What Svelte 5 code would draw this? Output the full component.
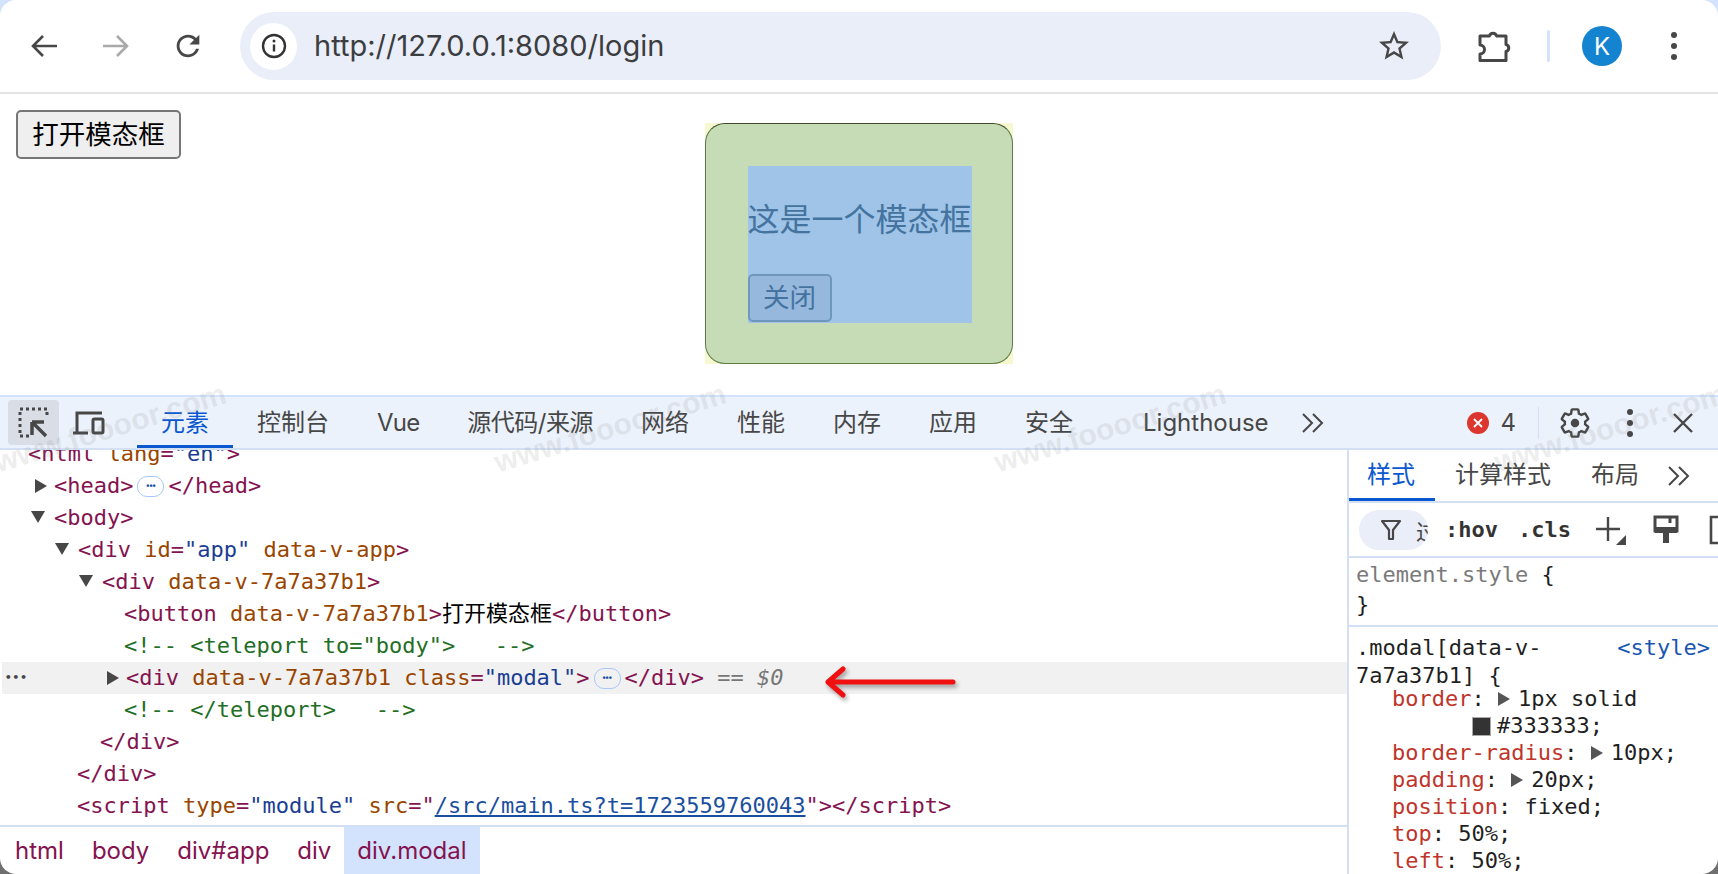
<script>
const tabs = [
	{ label: "控制台" },
	{ label: "Vue", cls: "tight-a" },
	{ label: "源代码/来源", cls: "tight-b" },
	{ label: "网络" },
	{ label: "性能" },
	{ label: "内存" },
	{ label: "应用" },
	{ label: "安全" },
	{ label: "Lighthouse", cls: "far" }
];
const crumbs = ["html", "body", "div#app", "div"];
const marks = [110, 610, 1110, 1610];
const scriptClose = "\"></scr" + "ipt>";

// t tag, a attr name, v attr value, c comment, txt plain text
const rows = [
	{ pad: 28, parts: [["t", "<html "], ["a", "lang"], ["t", "="], ["v", "\"en\""], ["t", ">"]] },
	{ pad: 54, arrow: "right", parts: [["t", "<head>"], ["more", ""], ["t", "</head>"]] },
	{ pad: 54, arrow: "down", parts: [["t", "<body>"]] },
	{ pad: 78, arrow: "down", parts: [["t", "<div "], ["a", "id"], ["t", "="], ["v", "\"app\""], ["a", " data-v-app"], ["t", ">"]] },
	{ pad: 102, arrow: "down", parts: [["t", "<div "], ["a", "data-v-7a7a37b1"], ["t", ">"]] },
	{ pad: 124, parts: [["t", "<button "], ["a", "data-v-7a7a37b1"], ["t", ">"], ["txt", "打开模态框"], ["t", "</button>"]] },
	{ pad: 124, parts: [["c", "<!-- <teleport to=\"body\">   -->"]] },
	{ pad: 126, arrow: "right", selected: true, parts: [["t", "<div "], ["a", "data-v-7a7a37b1 class"], ["t", "="], ["v", "\"modal\""], ["t", ">"], ["more", ""], ["t", "</div>"], ["eq", " == "], ["dollar", "$0"]] },
	{ pad: 124, parts: [["c", "<!-- </teleport>   -->"]] },
	{ pad: 100, parts: [["t", "</div>"]] },
	{ pad: 77, parts: [["t", "</div>"]] },
	{ pad: 77, parts: [["t", "<scr" + "ipt "], ["a", "type"], ["t", "="], ["v", "\"module\""], ["a", " src"], ["t", "=\""], ["l", "/src/main.ts?t=1723559760043"], ["t", scriptClose]] }
];
</script>

<div class="frame">
	<header class="toolbar">
		<button class="nav" aria-label="back">
			<svg width="32" height="32" viewBox="0 0 32 32"><path d="M29 16H5M15 6 5 16l10 10" class="line" /></svg>
		</button>
		<button class="nav" aria-label="forward">
			<svg width="32" height="32" viewBox="0 0 32 32"><path d="M3 16h24M17 6l10 10-10 10" class="line dim" /></svg>
		</button>
		<button class="nav" aria-label="reload">
			<svg width="34" height="34" viewBox="0 0 24 24"><path fill="#474747" d="M17.65 6.35A7.958 7.958 0 0 0 12 4c-4.42 0-7.99 3.58-7.99 8s3.57 8 7.99 8c3.73 0 6.84-2.55 7.73-6h-2.08A5.99 5.99 0 0 1 12 18c-3.31 0-6-2.69-6-6s2.69-6 6-6c1.66 0 3.14.69 4.22 1.78L13 11h7V4l-2.35 2.35z" /></svg>
		</button>
		<div class="omnibox">
			<span class="site">
				<svg width="26" height="26" viewBox="0 0 26 26"><circle cx="13" cy="13" r="11" fill="none" stroke="#333" stroke-width="2.4" /><path d="M13 11.5v7" stroke="#333" stroke-width="2.4" /><circle cx="13" cy="8" r="1.5" fill="#333" /></svg>
			</span>
			<span class="url">http://127.0.0.1:8080/login</span>
			<svg class="star" width="36" height="36" viewBox="0 0 24 24"><path fill="#474747" d="M22 9.24l-7.19-.62L12 2 9.19 8.63 2 9.24l5.46 4.73L5.82 21 12 17.27 18.18 21l-1.63-7.03L22 9.24zM12 15.4l-3.76 2.27 1-4.28-3.32-2.88 4.38-.38L12 6.1l1.71 4.04 4.38.38-3.32 2.88 1 4.28L12 15.4z" /></svg>
		</div>
		<svg class="puzzle" width="36" height="36" viewBox="0 0 36 36"><path d="M3 8h9.5a3.6 3.6 0 0 1 7 0H29v8.500a3.600 3.600 0 0 1 0 7V32.500H3V26a4.500 4.500 0 0 0 0-9z" fill="none" stroke="#474747" stroke-width="3" stroke-linejoin="round" /></svg>
		<span class="sep"></span>
		<span class="avatar">K</span>
		<span class="dots big"><i></i><i></i><i></i></span>
	</header>

	<main class="page">
		<button class="open">打开模态框</button>
		<div class="modal">
			<div class="modal-pad">
				<div class="modal-content">
					<p>这是一个模态框</p>
					<button class="close">关闭</button>
				</div>
			</div>
		</div>
	</main>

	<section class="devtools">
		<nav class="tabbar">
			<span class="inspect">
				<svg width="32" height="32" viewBox="0 0 32 32">
					<path d="M2 2h27v8M2 5v24h9" fill="none" stroke="#474747" stroke-width="3" stroke-dasharray="3 3" />
					<path d="M14 15h12M14 15v13M14 15l14 14" fill="none" stroke="#474747" stroke-width="3.500" />
				</svg>
			</span>
			<span class="device">
				<svg width="36" height="26" viewBox="0 0 36 26">
					<path d="M6 22V3h25M2 23h15" fill="none" stroke="#474747" stroke-width="3" />
					<rect x="22" y="9" width="10" height="14" rx="1.500" fill="none" stroke="#474747" stroke-width="3" />
				</svg>
			</span>
			<span class="tab active">元素</span>
			{#each tabs as tab}
				<span class="tab {tab.cls ?? ''}">{tab.label}</span>
			{/each}
			<span class="chev">
				<svg width="24" height="22" viewBox="0 0 24 22"><path d="M2 2l9 9-9 9M12 2l9 9-9 9" fill="none" stroke="#474747" stroke-width="2" /></svg>
			</span>
			<span class="tools">
				<span class="err">
					<svg width="22" height="22" viewBox="0 0 22 22"><circle cx="11" cy="11" r="11" fill="#dc362e" /><path d="M7 7l8 8M15 7l-8 8" stroke="#fff" stroke-width="1.8" /></svg>
				</span>
				<span class="errcount">4</span>
				<span class="toolsep"></span>
				<svg class="gear" width="34" height="34" viewBox="0 0 24 24">
					<path fill="none" stroke="#474747" stroke-width="1.7" d="M19.14 12.94c.04-.3.06-.61.06-.94 0-.32-.02-.64-.07-.94l2.03-1.58a.49.49 0 0 0 .12-.61l-1.92-3.32a.488.488 0 0 0-.59-.22l-2.39.96c-.5-.38-1.03-.7-1.62-.94l-.36-2.54a.484.484 0 0 0-.48-.41h-3.84c-.24 0-.43.17-.47.41l-.36 2.54c-.59.24-1.13.57-1.62.94l-2.39-.96c-.22-.08-.47 0-.59.22L2.74 8.87c-.12.21-.08.47.12.61l2.03 1.58c-.05.3-.09.63-.09.94s.02.64.07.94l-2.03 1.58a.49.49 0 0 0-.12.61l1.92 3.32c.12.22.37.29.59.22l2.39-.96c.5.38 1.03.7 1.62.94l.36 2.54c.05.24.24.41.48.41h3.84c.24 0 .44-.17.47-.41l.36-2.54c.59-.24 1.13-.56 1.62-.94l2.39.96c.22.08.47 0 .59-.22l1.92-3.32c.12-.22.07-.47-.12-.61l-2.01-1.58z" />
					<circle cx="12" cy="12" r="3" fill="#474747" />
				</svg>
				<span class="dots"><i></i><i></i><i></i></span>
				<svg class="closex" width="22" height="22" viewBox="0 0 22 22"><path d="M2 2l18 18M20 2 2 20" stroke="#474747" stroke-width="2.4" /></svg>
			</span>
		</nav>

		<div class="panels">
			<div class="elements">
				<div class="tree">
					<div class="rows">
						{#each rows as row}
							<div class="row" class:selected={row.selected} style="padding-left: {row.pad - (row.selected ? 2 : 0)}px">{#if row.selected}<span class="gutter">•••</span>{/if}{#if row.arrow}<span class="arrow {row.arrow}"></span>{/if}{#each row.parts as part}{#if part[0] === "more"}<span class="more">•••</span>{:else}<span class={part[0]}>{part[1]}</span>{/if}{/each}</div>
						{/each}
					</div>
					<svg class="pointer" width="140" height="40" viewBox="0 0 140 40">
						<path d="M134 20H10M24 7 9 20l15 13" fill="none" stroke="#f01010" stroke-width="5" stroke-linecap="round" stroke-linejoin="round" />
					</svg>
				</div>
				<div class="crumbs">
					{#each crumbs as crumb}
						<span class="crumb">{crumb}</span>
					{/each}
					<span class="crumb current">div.modal</span>
				</div>
			</div>

			<aside class="styles">
				<div class="stabs">
					<span class="stab active">样式</span>
					<span class="stab">计算样式</span>
					<span class="stab">布局</span>
					<svg class="schev" width="24" height="22" viewBox="0 0 24 22"><path d="M2 2l9 9-9 9M12 2l9 9-9 9" fill="none" stroke="#474747" stroke-width="2" /></svg>
				</div>
				<div class="filter">
					<span class="pill">
						<svg class="funnel" width="20" height="22" viewBox="0 0 20 22"><path d="M1 2h18l-7 9v9h-4v-9z" fill="none" stroke="#474747" stroke-width="2.2" stroke-linejoin="round" /></svg>
						<span class="pilltext">过滤</span>
					</span>
					<span class="flag">:hov</span>
					<span class="flag">.cls</span>
					<svg class="plus" width="30" height="30" viewBox="0 0 30 30"><path d="M12 2v24M0 14h24" stroke="#474747" stroke-width="2.4" /><path d="M30 20v10H20z" fill="#474747" /></svg>
					<svg class="brush" width="26" height="30" viewBox="0 0 26 30"><path d="M2 2h22v14H2z" fill="none" stroke="#474747" stroke-width="3" /><path d="M2 12h22v6H16v10h-6V18H2z" fill="#474747" /><path d="M17 2v6" stroke="#474747" stroke-width="3" /></svg>
					<svg class="bracket" width="12" height="30" viewBox="0 0 12 30"><path d="M11 2H2v26h9" fill="none" stroke="#474747" stroke-width="2.6" /></svg>
				</div>
				<div class="rule first">
					<div><span class="grey">element.style</span> {"{"}</div>
					<div>{"}"}</div>
				</div>
				<div class="rule second">
					<span class="source">&lt;style&gt;</span>
					<div class="selector">.modal[data-v-<br />7a7a37b1] {"{"}</div>
					<div class="prop"><span class="pn">border</span>: <span class="tri"></span>1px solid</div>
					<div class="prop cont"><span class="swatch"></span>#333333;</div>
					<div class="prop"><span class="pn">border-radius</span>: <span class="tri"></span>10px;</div>
					<div class="prop"><span class="pn">padding</span>: <span class="tri"></span>20px;</div>
					<div class="prop"><span class="pn">position</span>: fixed;</div>
					<div class="prop"><span class="pn">top</span>: 50%;</div>
					<div class="prop"><span class="pn">left</span>: 50%;</div>
				</div>
			</aside>
		</div>

		{#each marks as x}
			<span class="mark" style="left: {x - 125}px">www.foooor.com</span>
		{/each}
	</section>
</div>

<style>
:global(body) {
	background: linear-gradient(#d3e3fd 50%, #6f6f6f 50%);
	overflow: hidden;
}
.frame {
	position: relative;
	width: 1718px;
	height: 874px;
	background: #fff;
	border-radius: 16px;
	overflow: hidden;
	display: flex;
	flex-direction: column;
	font-family: Inter, "Noto Sans CJK SC", sans-serif;
}
button {
	font-family: inherit;
}

.toolbar {
	height: 92px;
	flex: none;
	border-bottom: 2px solid #e3e3e3;
	display: flex;
	align-items: center;
	padding-left: 8px;
}
.nav {
	width: 72px;
	height: 48px;
	border: 0;
	padding: 0;
	background: none;
	display: flex;
	align-items: center;
	justify-content: center;
}
.line {
	fill: none;
	stroke: #474747;
	stroke-width: 2.6;
}
.dim {
	stroke: #a9a9a9;
}
.omnibox {
	margin-left: 16px;
	width: 1201px;
	height: 68px;
	border-radius: 34px;
	background: #e9eef8;
	display: flex;
	align-items: center;
	padding-left: 10px;
	box-sizing: border-box;
}
.site {
	width: 47px;
	height: 47px;
	border-radius: 50%;
	background: #fff;
	display: flex;
	align-items: center;
	justify-content: center;
}
.url {
	margin-left: 17px;
	margin-top: -2px;
	font-size: 29px;
	color: #3c3d40;
}
.star {
	margin-left: auto;
	margin-right: 29px;
}
.puzzle {
	margin-left: 36px;
}
.sep {
	width: 3px;
	height: 32px;
	margin-left: 34px;
	background: #d3e3fd;
	border-radius: 2px;
}
.avatar {
	width: 40px;
	height: 40px;
	margin-left: 32px;
	border-radius: 50%;
	background: #1484d0;
	color: #fff;
	font-size: 24px;
	display: flex;
	align-items: center;
	justify-content: center;
}
.dots {
	display: flex;
	flex-direction: column;
	gap: 5px;
}
.dots i {
	width: 6px;
	height: 6px;
	border-radius: 50%;
	background: #474747;
}
.dots.big {
	margin-left: 49px;
}

.page {
	position: relative;
	height: 301px;
	flex: none;
}
.open {
	display: block;
	margin: 16px 0 0 16px;
	width: 165px;
	height: 49px;
	padding: 0 0 4px;
	border: 2px solid #767676;
	border-radius: 5px;
	background: #efefef;
	color: #000;
	font-size: 26.5px;
}
.modal {
	position: absolute;
	left: 705px;
	top: 29px;
	width: 308px;
	height: 241px;
	background: #f6f8cf;
}
.modal-pad {
	box-sizing: border-box;
	height: 100%;
	padding: 41.500px 40px 0 41.500px;
	background: #c5dcb6;
	border: 1.500px solid #5e7a47;
	border-top-color: #3f4a2c;
	border-radius: 20px;
}
.modal-content {
	height: 157px;
	background: #9fc4e7;
	color: #44739f;
}
.modal-content p {
	margin: 0;
	padding: 32px 0;
	font-size: 32px;
	line-height: 44px;
	white-space: nowrap;
}
.close {
	display: block;
	width: 84px;
	height: 48px;
	padding: 0 0 4px;
	border: 2px solid #6f97bd;
	border-radius: 5px;
	background: #95b8dc;
	color: #44739f;
	font-size: 26.5px;
}

.devtools {
	flex: 1;
	min-height: 0;
	display: flex;
	flex-direction: column;
	position: relative;
	border-top: 2px solid #d3e3fd;
}
.tabbar {
	height: 51px;
	flex: none;
	background: #ecf2fb;
	border-bottom: 2px solid #d3e0f3;
	display: flex;
	align-items: center;
	padding-left: 8px;
	color: #474747;
	font-size: 24px;
}
.inspect {
	width: 51px;
	height: 45px;
	background: #d9dee6;
	border-radius: 4px;
	display: flex;
	align-items: center;
	justify-content: center;
}
.device {
	margin-left: 12px;
	width: 36px;
	display: flex;
	margin-right: 30px;
}
.tab {
	padding: 0 24px;
	height: 51px;
	line-height: 51px;
	white-space: nowrap;
	box-sizing: border-box;
}
.tab.active {
	color: #0b57d0;
	border-bottom: 3px solid #0b57d0;
}
.tab.tight-a {
	letter-spacing: -0.8px;
}
.tab.tight-b {
	letter-spacing: -0.5px;
}
.tab.far {
	margin-left: 22px;
}
.chev {
	margin-left: 8px;
	display: flex;
}
.tools {
	margin-left: auto;
	display: flex;
	align-items: center;
}
.err {
	display: flex;
}
.errcount {
	margin-left: 11px;
}
.toolsep {
	width: 1px;
	height: 32px;
	margin-left: 22px;
	background: #d3e0f3;
}
.gear {
	margin-left: 19px;
}
.tools .dots {
	margin-left: 35px;
}
.closex {
	margin-left: 39px;
	margin-right: 24px;
}

.panels {
	flex: 1;
	min-height: 0;
	display: flex;
}
.elements {
	width: 1347px;
	flex: none;
	display: flex;
	flex-direction: column;
}
.tree {
	flex: 1;
	min-height: 0;
	overflow: hidden;
	position: relative;
}
.rows {
	margin-top: -12px;
}
.row {
	position: relative;
	height: 32px;
	line-height: 32px;
	font-family: "DejaVu Sans Mono", "Noto Sans CJK SC", monospace;
	font-size: 22px;
	white-space: pre;
	color: #000;
}
.row.selected {
	background: #f1f1f1;
	margin-left: 2px;
}
.gutter {
	position: absolute;
	left: 3px;
	top: 0;
	font-size: 11px;
	font-weight: bold;
	letter-spacing: 1px;
	color: #474747;
}
.arrow {
	position: absolute;
	width: 0;
	height: 0;
}
.arrow.right {
	margin-left: -19px;
	top: 9px;
	border-left: 12px solid #474747;
	border-top: 7px solid transparent;
	border-bottom: 7px solid transparent;
}
.arrow.down {
	margin-left: -23px;
	top: 9px;
	border-top: 12px solid #474747;
	border-left: 7px solid transparent;
	border-right: 7px solid transparent;
}
.t {
	color: #84134f;
}
.a {
	color: #994500;
}
.v {
	color: #1a3d94;
}
.c {
	color: #236e25;
}
.txt {
	color: #000;
}
.l {
	color: #1a4fa0;
	text-decoration: underline;
}
.eq {
	color: #777;
}
.dollar {
	color: #777;
	font-style: italic;
}
.more {
	display: inline-block;
	box-sizing: border-box;
	width: 27px;
	height: 21px;
	margin: 0 4px;
	border: 1.500px solid #a8c7fa;
	border-radius: 10px;
	color: #1a4fa0;
	font-family: "Liberation Sans", sans-serif;
	font-size: 9px;
	font-weight: bold;
	line-height: 18px;
	text-align: center;
	vertical-align: 4px;
}
.pointer {
	position: absolute;
	left: 819px;
	top: 212px;
	filter: drop-shadow(2px 3px 2px rgba(0, 0, 0, 0.35));
}
.crumbs {
	height: 47px;
	flex: none;
	border-top: 2px solid #d3e0f3;
	display: flex;
	font-size: 24px;
	color: #84134f;
	padding-left: 1px;
}
.crumb {
	padding: 0 14px;
	line-height: 47px;
	white-space: nowrap;
}
.crumb.current {
	background: #d3e3fd;
	padding: 0 13px;
	margin-left: -1px;
}

.styles {
	flex: 1;
	min-width: 0;
	border-left: 2px solid #d3e0f3;
	overflow: hidden;
	font-family: "DejaVu Sans Mono", monospace;
	font-size: 22px;
	color: #1f1f1f;
}
.stabs {
	height: 51px;
	background: #fff;
	border-bottom: 2px solid #d3e0f3;
	display: flex;
	align-items: center;
	font-family: Inter, "Noto Sans CJK SC", sans-serif;
	font-size: 24px;
	color: #474747;
}
.stab {
	padding: 0 20px;
	height: 51px;
	line-height: 49px;
	box-sizing: border-box;
	white-space: nowrap;
}
.stab:first-child {
	padding-left: 18px;
}
.stab.active {
	color: #0b57d0;
	border-bottom: 3px solid #0b57d0;
}
.schev {
	margin-left: 8px;
}
.filter {
	height: 53px;
	border-bottom: 2px solid #d3e0f3;
	display: flex;
	align-items: center;
	padding-left: 10px;
	white-space: nowrap;
}
.pill {
	width: 69px;
	height: 40px;
	flex: none;
	background: #e9eef8;
	border-radius: 20px;
	display: flex;
	align-items: center;
	padding-left: 22px;
	box-sizing: border-box;
	overflow: hidden;
	gap: 15px;
}
.funnel {
	flex: none;
}
.pilltext {
	flex: none;
	font-family: "Noto Sans CJK SC", sans-serif;
	font-size: 22px;
	color: #474747;
}
.flag {
	font-weight: bold;
	color: #333;
	margin-left: 17px;
}
.flag + .flag {
	margin-left: 20px;
}
.plus {
	flex: none;
	margin-left: 25px;
}
.brush {
	flex: none;
	margin-left: 27px;
}
.bracket {
	flex: none;
	margin-left: 30px;
}
.rule {
	padding-left: 7px;
	line-height: 28px;
}
.first {
	height: 69px;
	padding-top: 2px;
	box-sizing: border-box;
	border-bottom: 2px solid #d3e0f3;
	line-height: 30px;
}
.grey {
	color: #7a7a7a;
}
.second {
	position: relative;
	padding-top: 7px;
}
.source {
	float: right;
	margin-right: 8px;
	color: #1a56b0;
}
.selector {
	line-height: 28px;
	margin-bottom: -5px;
}
.prop {
	padding-left: 36px;
	line-height: 27px;
}
.prop.cont {
	padding-left: 116px;
}
.pn {
	color: #c0352b;
}
.tri {
	display: inline-block;
	margin-right: 8px;
	border-left: 12px solid #555;
	border-top: 7px solid transparent;
	border-bottom: 7px solid transparent;
}
.swatch {
	display: inline-block;
	box-sizing: border-box;
	width: 19px;
	height: 19px;
	margin-right: 6px;
	background: #333;
	border: 1px solid #aaa;
	vertical-align: -3px;
}
.mark {
	position: absolute;
	top: 14px;
	width: 250px;
	text-align: center;
	font-family: "Liberation Sans", sans-serif;
	font-size: 30px;
	font-weight: bold;
	color: rgba(120, 120, 120, 0.15);
	transform: rotate(-17deg);
	pointer-events: none;
	white-space: nowrap;
}
</style>
